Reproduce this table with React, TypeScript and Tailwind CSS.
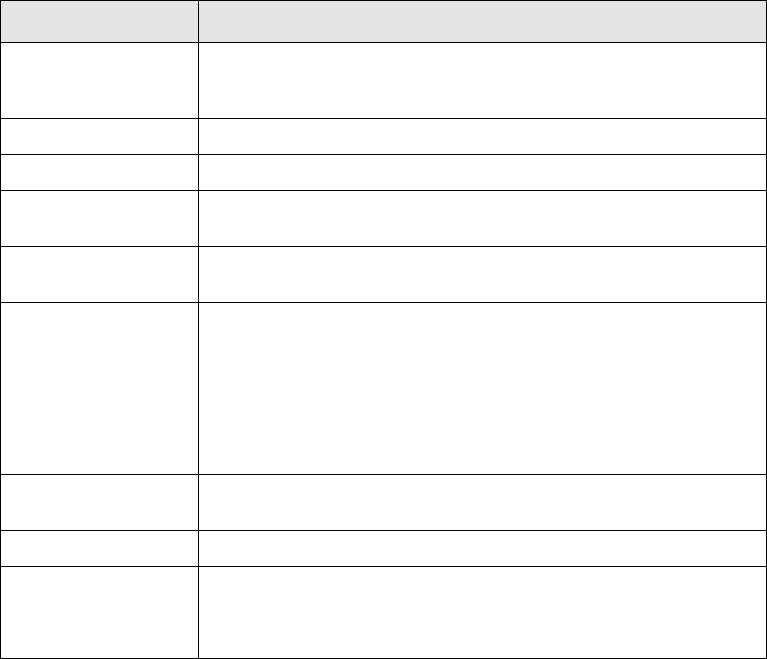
// Row heights include the 1px top border of each body row
const rows = ['h-[76px]', 'h-[36px]', 'h-[36px]', 'h-[56px]', 'h-[56px]', 'h-[172px]', 'h-[56px]', 'h-[36px]', 'h-[92px]']

function Row({ h, head }: { h: string; head?: boolean }) {
  return (
    <div className={`flex ${h} ${head ? 'bg-[#e5e5e5]' : 'border-t border-black bg-white'}`}>
      <div className="w-[198px] shrink-0 border-r border-black" />
      <div className="flex-1" />
    </div>
  )
}

export default function App() {
  return (
    <div className="min-h-[659px] bg-white font-['Liberation_Sans',sans-serif]">
      <div className="w-[767px] border border-black">
        <Row h="h-[41px]" head />
        {rows.map((h, i) => (
          <Row key={i} h={h} />
        ))}
      </div>
    </div>
  )
}
